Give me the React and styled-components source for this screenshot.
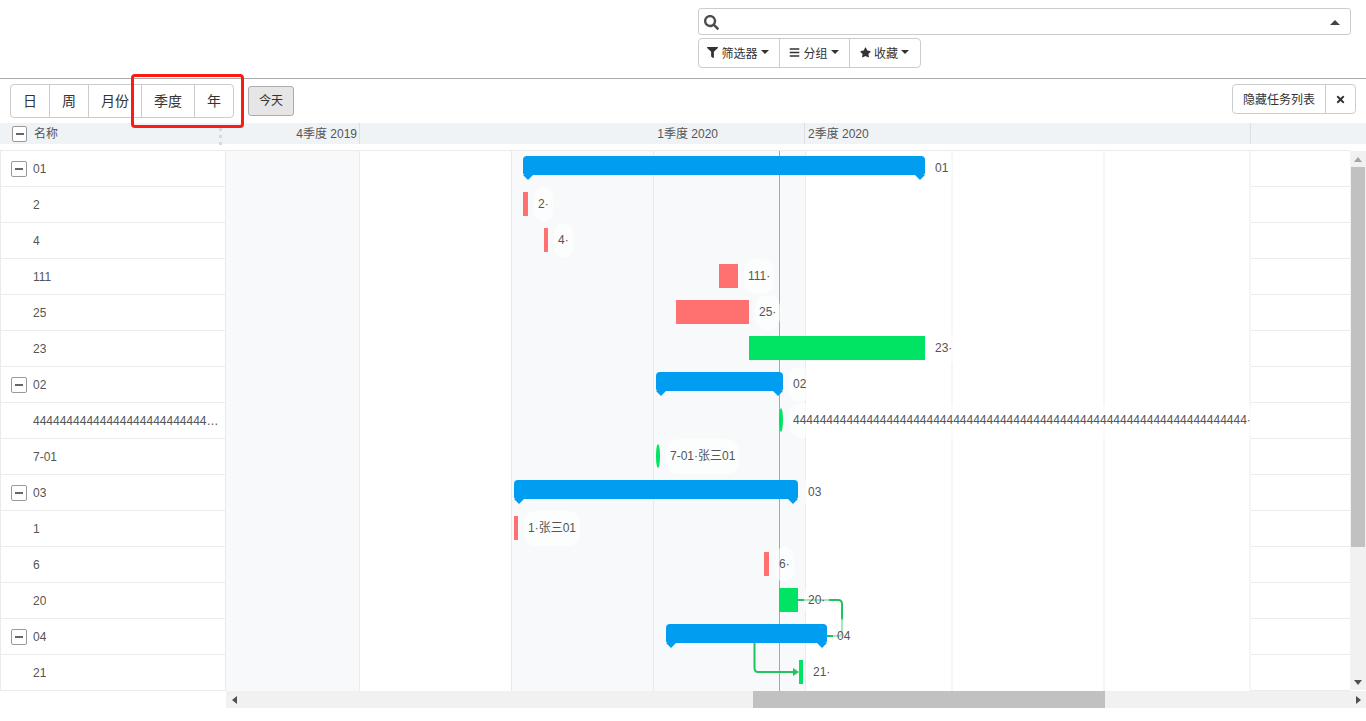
import React from "react";
import styled, { createGlobalStyle } from "styled-components";
import { FaSearch, FaFilter, FaBars, FaStar, FaTimes } from "react-icons/fa";

const GlobalStyle = createGlobalStyle`
  html, body {
    margin: 0;
    padding: 0;
    background: #fff;
    font-family: "Liberation Sans", "Noto Sans CJK SC", sans-serif;
    font-size: 12px;
    color: #555;
  }
  * { box-sizing: border-box; }
`;

const Page = styled.div`
  position: relative;
  width: 1366px;
  height: 721px;
  overflow: hidden;
`;

const ControlPanel = styled.div`
  height: 79px;
  border-bottom: 1px solid #aaa;
  padding: 8px 15px 0 698px;
`;

const SearchBox = styled.div`
  height: 27px;
  border: 1px solid #ccc;
  border-radius: 3px;
  display: flex;
  align-items: center;
  justify-content: space-between;
  padding: 1px 10px 0 5px;
  color: #4c4c4c;
  font-size: 15px;
`;

const CaretUp = styled.span`
  width: 0;
  height: 0;
  border-left: 5px solid transparent;
  border-right: 5px solid transparent;
  border-bottom: 5px solid #444;
`;

const Caret = styled.span`
  width: 0;
  height: 0;
  border-left: 4px solid transparent;
  border-right: 4px solid transparent;
  border-top: 4px solid #333;
`;

const BtnGroup = styled.div`
  display: inline-flex;
  border: 1px solid #ccc;
  border-radius: 4px;
  height: ${(p) => p.$height}px;
  margin-top: ${(p) => p.$top || 0}px;
  color: #333;
`;

const GroupBtn = styled.div`
  width: ${(p) => p.$width}px;
  display: flex;
  align-items: center;
  justify-content: center;
  gap: 3px;
  padding-bottom: ${(p) => p.$lift || 0}px;
  padding-right: ${(p) => p.$nudge || 0}px;
  font-size: ${(p) => p.$size || 12}px;
  white-space: nowrap;
  & + & { border-left: 1px solid #ccc; }
  svg { font-size: 11px; }
`;

const Toolbar = styled.div`
  height: 44px;
  display: flex;
  align-items: flex-start;
  padding: 5px 10px;
`;

const TodayBtn = styled.div`
  width: 46px;
  height: 30px;
  margin: 2px 0 0 14px;
  padding-bottom: 3px;
  display: flex;
  align-items: center;
  justify-content: center;
  background: #e6e6e6;
  border: 1px solid #adadad;
  border-radius: 3px;
  color: #333;
`;

const Spacer = styled.div`
  flex: 1;
`;

const Highlight = styled.div`
  position: absolute;
  left: 131px;
  top: 74px;
  width: 113px;
  height: 54px;
  border: 3px solid #fb1b12;
  border-radius: 4px;
  z-index: 20;
`;

const GanttHeader = styled.div`
  height: 21px;
  display: flex;
  background: #f0f3f6;
  margin-bottom: 6px;
`;

const HeadName = styled.div`
  position: relative;
  width: 226px;
  display: flex;
  align-items: center;
  gap: 7px;
  padding-left: 12px;
  &::after {
    content: "";
    position: absolute;
    left: 219px;
    top: 5px;
    height: 17px;
    border-left: 3px dotted #d8d8d8;
  }
`;

const HeadLabel = styled.span`
  margin-bottom: 3px;
`;

const ScaleCell = styled.div`
  width: ${(p) => p.$width}px;
  display: flex;
  align-items: center;
  justify-content: ${(p) => p.$justify || "flex-start"};
  padding: ${(p) => p.$pad || "0"};
  border-right: ${(p) => (p.$line ? "1px solid #dcdfe3" : "none")};
  white-space: nowrap;
`;

const MinusBox = styled.span`
  width: ${(p) => p.$size || 16}px;
  height: 16px;
  flex: none;
  border: 1px solid #999;
  border-radius: 2px;
  background: #fff;
  display: flex;
  align-items: center;
  justify-content: center;
  &::before {
    content: "";
    width: 8px;
    height: 2px;
    background: #666;
  }
`;

const GanttMain = styled.div`
  display: flex;
  height: 540px;
`;

const GanttBody = styled.div`
  position: relative;
  isolation: isolate;
  width: 1350px;
  height: 541px;
  border-top: 1px solid #ebebeb;
  overflow: hidden;
`;

const GridLayer = styled.div`
  position: absolute;
  left: 226px;
  top: 0;
  bottom: 0;
  right: 0;
  display: flex;
  z-index: 0;
`;

const GridCol = styled.div`
  width: ${(p) => p.$width}px;
  flex: none;
  background: ${(p) => (p.$shade ? "#f8f9fb" : "#fff")};
  border-right: ${(p) => (p.$soft ? "2px solid #f5f5f5" : "1px solid #e8eaed")};
`;

const TodayLine = styled.div`
  position: absolute;
  left: 779px;
  top: 0;
  bottom: 0;
  width: 1px;
  background: #e98a8f;
  z-index: 1;
`;

const LinkLayer = styled.svg`
  position: absolute;
  left: 0;
  top: 0;
  width: 1350px;
  height: 540px;
  z-index: 1;
`;

const Row = styled.div`
  display: flex;
  height: 36px;
  border-bottom: 1px solid #ebebeb;
`;

const NameCell = styled.div`
  position: relative;
  z-index: 4;
  width: 226px;
  flex: none;
  display: flex;
  align-items: center;
  gap: 6px;
  padding: 0 6px 0 ${(p) => (p.$group ? 10 : 32)}px;
  background: #fff;
  border-left: 1px solid #ebebeb;
  border-right: 1px solid #e8eaed;
`;

const NameText = styled.span`
  overflow: hidden;
  white-space: nowrap;
  text-overflow: ellipsis;
`;

const ChartCell = styled.div`
  position: relative;
  flex: 1;
`;

const barColors = { red: "#ff7070", green: "#00e363" };

const TaskBar = styled.div`
  position: absolute;
  top: 5px;
  height: 24px;
  z-index: 3;
  background: ${(p) => barColors[p.$kind]};
`;

const Milestone = styled.div`
  position: absolute;
  top: 5px;
  height: 24px;
  z-index: 3;
  background: ${barColors.green};
  border-radius: 50%;
`;

const GroupBar = styled.div`
  position: absolute;
  top: 5px;
  height: 19px;
  z-index: 3;
  background: #009df0;
  border-radius: 4px 4px 2px 2px;
  &::before,
  &::after {
    content: "";
    position: absolute;
    top: 100%;
    border-left: 5px solid transparent;
    border-right: 5px solid transparent;
    border-top: 5px solid #009df0;
  }
  &::before { left: 0; }
  &::after { right: 0; }
`;

const BarLabel = styled.div`
  position: absolute;
  top: 0;
  height: 35px;
  padding: 0 4px 1px;
  display: flex;
  align-items: center;
  line-height: 14px;
  white-space: nowrap;
  border-radius: 12px;
  background: rgba(255, 255, 255, 0.6);
  z-index: 2;
`;

const ScrollTrack = styled.div`
  background: #f1f1f1;
  display: flex;
  align-items: center;
  flex: none;
`;

const VTrack = styled(ScrollTrack)`
  width: 16px;
  height: 539px;
  margin-top: 1px;
  flex-direction: column;
  justify-content: flex-start;
`;

const HTrack = styled(ScrollTrack)`
  height: 17px;
  margin: 1px 0 0 226px;
  width: 1140px;
`;

const ArrowBtn = styled.div`
  flex: none;
  width: 16px;
  height: 16px;
  display: flex;
  align-items: center;
  justify-content: center;
  &::before {
    content: "";
    width: 0;
    height: 0;
    border: 4px solid transparent;
    ${(p) => p.$dir === "up" && "border-top: 0; border-bottom: 5px solid #a3a3a3;"}
    ${(p) => p.$dir === "down" && "border-bottom: 0; border-top: 5px solid #505050;"}
    ${(p) => p.$dir === "left" && "border-left: 0; border-right: 5px solid #505050;"}
    ${(p) => p.$dir === "right" && "border-right: 0; border-left: 5px solid #505050;"}
  }
`;

const VThumb = styled.div`
  width: 14px;
  height: 380px;
  background: #c1c1c1;
`;

const VGap = styled.div`
  flex: 1;
`;

const HThumb = styled.div`
  width: 352px;
  height: 100%;
  margin-left: 511px;
  background: #c1c1c1;
`;

const long4 = "4".repeat(68);

const columns = [
  { width: 134, shade: true },
  { width: 152 },
  { width: 142, shade: true },
  { width: 152, shade: true },
  { width: 147, soft: true },
  { width: 152, soft: true },
  { width: 146, soft: true },
];

// x0/x1 are page coordinates of the bar
const rows = [
  { name: "01", group: true, kind: "group", x0: 523, x1: 925, label: "01" },
  { name: "2", kind: "red", x0: 523, x1: 528, label: "2·" },
  { name: "4", kind: "red", x0: 544, x1: 548, label: "4·" },
  { name: "111", kind: "red", x0: 719, x1: 738, label: "111·" },
  { name: "25", kind: "red", x0: 676, x1: 749, label: "25·" },
  { name: "23", kind: "green", x0: 749, x1: 925, label: "23·" },
  { name: "02", group: true, kind: "group", x0: 656, x1: 783, label: "02" },
  { name: "4".repeat(30), kind: "mile", x0: 779, x1: 783, label: long4 + "·" },
  { name: "7-01", kind: "mile", x0: 656, x1: 660, label: "7-01·张三01" },
  { name: "03", group: true, kind: "group", x0: 514, x1: 798, label: "03" },
  { name: "1", kind: "red", x0: 514, x1: 518, label: "1·张三01" },
  { name: "6", kind: "red", x0: 764, x1: 769, label: "6·" },
  { name: "20", kind: "green", x0: 779, x1: 798, label: "20·" },
  { name: "04", group: true, kind: "group", x0: 666, x1: 827, label: "04" },
  { name: "21", kind: "green", x0: 799, x1: 803, label: "21·" },
];

const Bar = ({ kind, x0, x1 }) => {
  const style = { left: x0 - 226, width: x1 - x0 };
  if (kind === "group") return <GroupBar style={style} />;
  if (kind === "mile") return <Milestone style={style} />;
  return <TaskBar $kind={kind} style={style} />;
};

const App = () => {
  return (
    <Page>
      <GlobalStyle />
      <ControlPanel>
        <SearchBox>
          <FaSearch />
          <CaretUp />
        </SearchBox>
        <BtnGroup $height={30} $top={3}>
          <GroupBtn $width={80} $lift={2} $nudge={2}>
            <FaFilter />
            筛选器
            <Caret />
          </GroupBtn>
          <GroupBtn $width={70} $lift={2} $nudge={1}>
            <FaBars />
            分组
            <Caret />
          </GroupBtn>
          <GroupBtn $width={71} $lift={2} $nudge={1}>
            <FaStar />
            收藏
            <Caret />
          </GroupBtn>
        </BtnGroup>
      </ControlPanel>

      <Toolbar>
        <BtnGroup $height={34}>
          <GroupBtn $width={38} $size={14} $lift={2}>日</GroupBtn>
          <GroupBtn $width={39} $size={14} $lift={2}>周</GroupBtn>
          <GroupBtn $width={53} $size={14} $lift={2}>月份</GroupBtn>
          <GroupBtn $width={53} $size={14} $lift={2}>季度</GroupBtn>
          <GroupBtn $width={39} $size={14} $lift={2}>年</GroupBtn>
        </BtnGroup>
        <TodayBtn>今天</TodayBtn>
        <Spacer />
        <BtnGroup $height={30}>
          <GroupBtn $width={92} $lift={2}>隐藏任务列表</GroupBtn>
          <GroupBtn $width={30}>
            <FaTimes />
          </GroupBtn>
        </BtnGroup>
      </Toolbar>
      <Highlight />

      <GanttHeader>
        <HeadName>
          <MinusBox $size={15} />
          <HeadLabel>名称</HeadLabel>
        </HeadName>
        <ScaleCell $width={134} $justify="flex-end" $pad="0 2px 0 0" $line>
          <HeadLabel>4季度 2019</HeadLabel>
        </ScaleCell>
        <ScaleCell $width={445} $justify="flex-end" $pad="0 86px 0 0" $line>
          <HeadLabel>1季度 2020</HeadLabel>
        </ScaleCell>
        <ScaleCell $width={446} $pad="0 0 0 3px" $line>
          <HeadLabel>2季度 2020</HeadLabel>
        </ScaleCell>
      </GanttHeader>

      <GanttMain>
        <GanttBody>
          <GridLayer>
            {columns.map((c, i) => (
              <GridCol key={i} $width={c.width} $shade={c.shade} $soft={c.soft} />
            ))}
          </GridLayer>
          <TodayLine />
          <LinkLayer viewBox="0 0 1350 540">
            <g fill="none" stroke="#1fc45e" strokeWidth="2">
              <path d="M798 449 H838 Q842 449 842 453 V481 Q842 485 838 485 H827" />
              <path d="M754.500 490 V517 Q754.500 521 758 521 H794" />
            </g>
            <path d="M793 517 L799 521 L793 525 Z" fill="#1fc45e" />
          </LinkLayer>
          {rows.map((r, i) => (
            <Row key={i}>
              <NameCell $group={r.group}>
                {r.group && <MinusBox />}
                <NameText>{r.name}</NameText>
              </NameCell>
              <ChartCell>
                <Bar kind={r.kind} x0={r.x0} x1={r.x1} />
                <BarLabel style={{ left: r.x1 - 226 + 6 }}>{r.label}</BarLabel>
              </ChartCell>
            </Row>
          ))}
        </GanttBody>
        <VTrack>
          <ArrowBtn $dir="up" />
          <VThumb />
          <VGap />
          <ArrowBtn $dir="down" />
        </VTrack>
      </GanttMain>
      <HTrack>
        <ArrowBtn $dir="left" />
        <HThumb />
        <VGap />
        <ArrowBtn $dir="right" />
      </HTrack>
    </Page>
  );
};

export default App;
